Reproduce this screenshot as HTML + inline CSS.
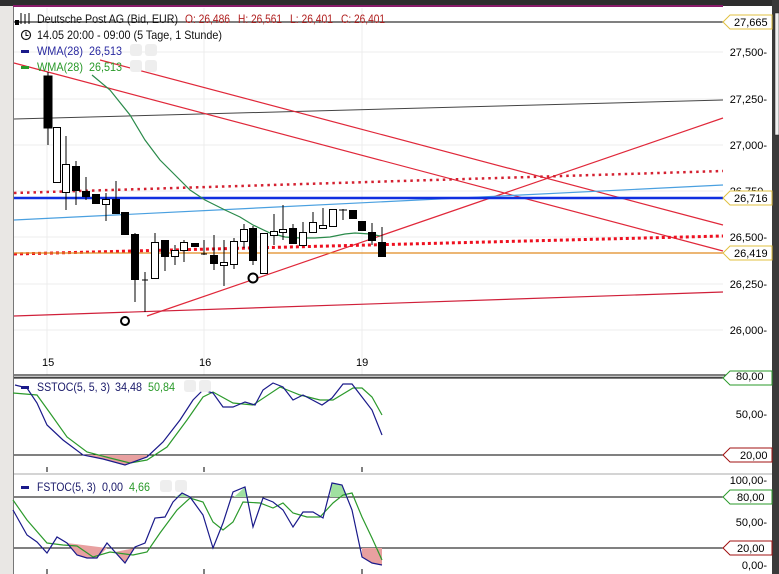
<!DOCTYPE html>
<html><head><meta charset="utf-8"><style>
html,body{margin:0;padding:0;background:#fff;}
svg{display:block;font-family:"Liberation Sans",sans-serif;}
</style></head><body>
<svg width="779" height="574" viewBox="0 0 779 574" xmlns="http://www.w3.org/2000/svg">
<rect width="779" height="574" fill="#fff"/>
<rect x="0" y="0" width="13" height="574" fill="#e9e7e4"/>
<line x1="13.5" y1="0" x2="13.5" y2="574" stroke="#777"/>
<rect x="0" y="0" width="779" height="6" fill="#2e2e2e"/>
<rect x="13" y="5" width="710" height="2" fill="#8a1a6a"/>
<rect x="772" y="0" width="7" height="574" fill="#3a3a3a"/>
<rect x="775" y="13" width="4" height="122" fill="#f0f0f0" stroke="#222" stroke-width="0.5"/>
<g stroke="#ececec" stroke-width="1">
<line x1="14" y1="52" x2="723" y2="52"/><line x1="14" y1="99" x2="723" y2="99"/>
<line x1="14" y1="145" x2="723" y2="145"/><line x1="14" y1="191" x2="723" y2="191"/>
<line x1="14" y1="237" x2="723" y2="237"/><line x1="14" y1="284" x2="723" y2="284"/>
<line x1="14" y1="330" x2="723" y2="330"/>
<line x1="47" y1="8" x2="47" y2="375"/><line x1="204" y1="8" x2="204" y2="375"/><line x1="362" y1="8" x2="362" y2="375"/>
</g>
<line x1="14" y1="22" x2="723" y2="22" stroke="#000"/>
<line x1="14" y1="119" x2="723" y2="100" stroke="#444"/>
<line x1="14" y1="63" x2="723" y2="251" stroke="#e0283a" stroke-width="1.2"/>
<line x1="100" y1="60" x2="723" y2="225" stroke="#e0283a" stroke-width="1.2"/>
<line x1="147" y1="316" x2="723" y2="118" stroke="#e0283a" stroke-width="1.2"/>
<line x1="14" y1="316" x2="723" y2="292" stroke="#d0203a" stroke-width="1.2"/>
<line x1="14" y1="193" x2="723" y2="171" stroke="#d42030" stroke-width="2.5" stroke-dasharray="2.5,4"/>
<line x1="14" y1="254" x2="723" y2="236" stroke="#ee1020" stroke-width="3" stroke-dasharray="3,3"/>
<line x1="14" y1="220" x2="723" y2="185" stroke="#4aa0e0" stroke-width="1.2"/>
<line x1="14" y1="198" x2="723" y2="198" stroke="#1030e0" stroke-width="2.5"/>
<line x1="14" y1="253" x2="723" y2="253" stroke="#e08a20" stroke-width="1.2"/>
<polyline fill="none" stroke="#2a8a4a" stroke-width="1.2" points="92,75 110,90 130,115 145,140 160,160 175,175 190,190 205,200 225,210 240,217 253,225 270,233 285,237 300,238 315,238 330,237 345,234 355,233 370,234 380,236"/>
<g stroke="#000" stroke-width="1">
<line x1="48" y1="72" x2="48" y2="145"/><rect x="44" y="76" width="8" height="52" fill="#000"/>
<rect x="53.5" y="127.5" width="7" height="55" fill="#fff"/>
<line x1="66" y1="136" x2="66" y2="210"/><rect x="62.5" y="164.5" width="7" height="28" fill="#fff"/>
<line x1="76" y1="161" x2="76" y2="205"/><rect x="72.5" y="166.5" width="7" height="24" fill="#000"/>
<line x1="86" y1="177" x2="86" y2="200"/><rect x="82.5" y="191.5" width="7" height="5" fill="#000"/>
<rect x="92.5" y="194.5" width="7" height="9" fill="#000"/>
<line x1="106" y1="193" x2="106" y2="221"/><rect x="102.5" y="199.5" width="7" height="5" fill="#fff"/>
<line x1="116" y1="181" x2="116" y2="213"/><rect x="112.5" y="199.5" width="7" height="14" fill="#000"/>
<rect x="121.5" y="212.5" width="7" height="22" fill="#000"/>
<line x1="135" y1="233" x2="135" y2="302"/><rect x="131.5" y="234.5" width="7" height="45" fill="#000"/>
<line x1="145" y1="272" x2="145" y2="312"/><line x1="142" y1="280" x2="148" y2="280"/>
<line x1="155" y1="233" x2="155" y2="279"/><rect x="151.5" y="242.5" width="7" height="36" fill="#fff"/>
<line x1="165" y1="240" x2="165" y2="271"/><rect x="161.5" y="240.5" width="7" height="16" fill="#000"/>
<line x1="175" y1="245" x2="175" y2="265"/><rect x="171.5" y="250.5" width="7" height="6" fill="#fff"/>
<line x1="184" y1="240" x2="184" y2="262"/><rect x="180.5" y="242.5" width="7" height="8" fill="#fff"/>
<rect x="191.5" y="243.5" width="7" height="3" fill="#000"/>
<line x1="204" y1="240" x2="204" y2="255"/><line x1="201" y1="254" x2="207" y2="254"/>
<line x1="214" y1="235" x2="214" y2="270"/><rect x="210.5" y="255.5" width="7" height="8" fill="#000"/>
<line x1="224" y1="240" x2="224" y2="286"/><rect x="220.5" y="262.5" width="7" height="3" fill="#fff"/>
<line x1="234" y1="238" x2="234" y2="269"/><rect x="230.5" y="241.5" width="7" height="23" fill="#fff"/>
<line x1="244" y1="224" x2="244" y2="248"/><rect x="240.5" y="229.5" width="7" height="12" fill="#fff"/>
<line x1="253" y1="226" x2="253" y2="265"/><rect x="249.5" y="228.5" width="7" height="32" fill="#000"/>
<rect x="260.5" y="233.5" width="7" height="40" fill="#fff"/>
<line x1="274" y1="214" x2="274" y2="245"/><rect x="270.5" y="231.5" width="7" height="4" fill="#fff"/>
<line x1="283" y1="205" x2="283" y2="240"/><rect x="279.5" y="229.5" width="7" height="3" fill="#fff"/>
<line x1="293" y1="224" x2="293" y2="243"/><rect x="289.5" y="228.5" width="7" height="15" fill="#000"/>
<line x1="303" y1="222" x2="303" y2="245"/><rect x="299.5" y="232.5" width="7" height="13" fill="#fff"/>
<line x1="313" y1="212" x2="313" y2="232"/><rect x="309.5" y="222.5" width="7" height="10" fill="#fff"/>
<line x1="323" y1="208" x2="323" y2="228"/><rect x="319.5" y="225.5" width="7" height="3" fill="#fff"/>
<rect x="329.5" y="209.5" width="7" height="17" fill="#fff"/>
<line x1="343" y1="209" x2="343" y2="220"/><line x1="339" y1="210" x2="347" y2="210"/>
<rect x="349.5" y="210.5" width="7" height="8" fill="#000"/>
<rect x="358.5" y="221.5" width="7" height="9" fill="#000"/>
<line x1="372" y1="223" x2="372" y2="245"/><rect x="368.5" y="232.5" width="7" height="8" fill="#000"/>
<line x1="382" y1="227" x2="382" y2="256"/><rect x="378.5" y="242.5" width="7" height="14" fill="#000"/>
</g>
<circle cx="125" cy="321" r="4" fill="#fff" stroke="#000" stroke-width="2"/>
<circle cx="253" cy="278" r="4.5" fill="#fff" stroke="#000" stroke-width="2"/>
<g font-size="11" fill="#000" text-anchor="end">
<text x="767" y="56">27,500-</text><text x="767" y="103">27,250-</text>
<text x="767" y="149">27,000-</text><text x="767" y="195">26,750-</text>
<text x="767" y="241">26,500-</text><text x="767" y="288">26,250-</text>
<text x="767" y="334">26,000-</text>
</g>
<g font-size="11">
<path d="M723,22 L730,15 H772 V29 H730 Z" fill="#fff" stroke="#e0c040"/><text x="734" y="26">27,665</text>
<path d="M723,198 L730,191 H772 V205 H730 Z" fill="#fff" stroke="#e0c040"/><text x="734" y="202">26,716</text>
<path d="M723,253 L730,246 H772 V260 H730 Z" fill="#fff" stroke="#e0c040"/><text x="734" y="257">26,419</text>
</g>
<g font-size="11" fill="#000"><text x="42" y="366">15</text><text x="199" y="366">16</text><text x="356" y="366">19</text></g>
<line x1="14" y1="375" x2="772" y2="375" stroke="#000"/>
<line x1="14" y1="377" x2="772" y2="377" stroke="#888"/>
<line x1="14" y1="378" x2="723" y2="378" stroke="#000"/>
<line x1="14" y1="455" x2="723" y2="455" stroke="#000"/>
<line x1="14" y1="474" x2="772" y2="474" stroke="#aaa"/>
<g stroke="#000"><line x1="47" y1="467" x2="47" y2="472"/><line x1="204" y1="467" x2="204" y2="472"/><line x1="362" y1="467" x2="362" y2="472"/>
<line x1="47" y1="569" x2="47" y2="574"/><line x1="204" y1="569" x2="204" y2="574"/><line x1="362" y1="569" x2="362" y2="574"/></g>
<polygon points="83,455 103,459 125,465 147,457 147,455" fill="#e8a0a0"/>
<polyline fill="none" stroke="#2c9a2c" stroke-width="1.2" points="13,393 37,395 50,413 67,437 87,452 110,458 130,463 147,460 167,447 187,420 203,397 213,392 233,403 253,405 280,387 300,395 320,400 333,400 353,388 362,388 372,397 382,415"/>
<polyline fill="none" stroke="#1a1a8a" stroke-width="1.2" points="15,385 27,388 37,403 47,425 63,440 83,455 103,459 125,465 147,457 163,442 180,420 193,400 203,390 213,393 223,407 233,407 245,402 255,405 263,390 273,383 283,387 293,400 303,395 322,405 332,398 343,384 352,384 362,397 372,410 382,435"/>
<g font-size="11" text-anchor="end"><text x="767" y="418">50,00-</text></g>
<path d="M723,378 L730,371 H772 V385 H730 Z" fill="#fff" stroke="#2a9a2a"/><text x="736" y="380" font-size="11">80,00</text>
<path d="M723,455 L730,448 H772 V462 H730 Z" fill="#fff" stroke="#a01010"/><text x="740" y="459" font-size="11">20,00</text>
<line x1="14" y1="497" x2="723" y2="497" stroke="#000"/>
<line x1="14" y1="548" x2="723" y2="548" stroke="#000"/>
<polygon points="67,543 77,555 87,558 97,558 107,548" fill="#e8a0a0"/>
<polygon points="115,552 125,563 135,548" fill="#e8a0a0"/>
<polygon points="362,548 362,557 372,563 382,565 382,548" fill="#e8a0a0"/>
<polygon points="175,497 182,493 190,497" fill="#a0e0a0"/>
<polygon points="234,497 245,487 248,497" fill="#a0e0a0"/>
<polygon points="330,497 332,483 342,485 348,497" fill="#a0e0a0"/>
<polyline fill="none" stroke="#2c9a2c" stroke-width="1.2" points="13,500 27,520 47,543 63,545 77,546 93,557 110,552 133,555 147,552 160,533 177,510 190,498 203,502 213,522 223,530 233,522 243,502 260,503 273,508 283,503 293,513 307,517 320,517 333,503 343,495 352,493 362,517 372,538 382,560"/>
<polyline fill="none" stroke="#1a1a8a" stroke-width="1.2" points="13,510 27,535 37,542 47,553 57,537 67,543 77,555 87,558 97,558 107,543 115,552 125,563 135,547 145,543 155,518 165,517 173,502 182,493 190,497 203,515 213,548 223,523 233,492 245,487 253,527 263,498 273,502 283,510 293,527 303,512 313,512 323,518 332,483 342,485 352,510 362,557 372,563 382,565"/>
<g font-size="11" text-anchor="end"><text x="767" y="484">100,00-</text><text x="767" y="526">50,00-</text><text x="767" y="569">0,00-</text></g>
<path d="M723,497 L730,490 H772 V504 H730 Z" fill="#fff" stroke="#2a9a2a"/><text x="737" y="501" font-size="11">80,00</text>
<path d="M723,548 L730,541 H772 V555 H730 Z" fill="#fff" stroke="#a01010"/><text x="737" y="552" font-size="11">20,00</text>
<g font-size="12" lengthAdjust="spacingAndGlyphs">
<g stroke="#000" stroke-width="1"><line x1="21" y1="13" x2="21" y2="24"/><line x1="25" y1="14" x2="25" y2="24"/><line x1="29" y1="13" x2="29" y2="24"/></g>
<rect x="15" y="20" width="4" height="5" fill="#000"/>
<text x="37" y="23" fill="#111" textLength="141" lengthAdjust="spacingAndGlyphs">Deutsche Post AG (Bid, EUR)</text>
<g fill="#b02020"><text x="185" y="23" textLength="45" lengthAdjust="spacingAndGlyphs">O: 26,486</text><text x="238" y="23" textLength="44" lengthAdjust="spacingAndGlyphs">H: 26,561</text><text x="290" y="23" textLength="43" lengthAdjust="spacingAndGlyphs">L: 26,401</text><text x="341" y="23" textLength="44" lengthAdjust="spacingAndGlyphs">C: 26,401</text></g>
<circle cx="26" cy="35" r="4.5" fill="none" stroke="#111" stroke-width="1.2"/><path d="M26,32 V35.5 H28.5" fill="none" stroke="#111"/>
<text x="37" y="39" fill="#111" textLength="185" lengthAdjust="spacingAndGlyphs">14.05 20:00 - 09:00 (5 Tage, 1 Stunde)</text>
<rect x="21" y="50" width="8" height="3" fill="#1a1a8a"/><text x="37" y="55" fill="#2a2aa0" textLength="46" lengthAdjust="spacingAndGlyphs">WMA(28)</text><text x="89" y="55" fill="#2a2aa0" textLength="33" lengthAdjust="spacingAndGlyphs">26,513</text>
<rect x="21" y="66" width="8" height="3" fill="#2a9a2a"/><text x="37" y="71" fill="#2a9a2a" textLength="46" lengthAdjust="spacingAndGlyphs">WMA(28)</text><text x="89" y="71" fill="#2a9a2a" textLength="33" lengthAdjust="spacingAndGlyphs">26,513</text>
<rect x="130" y="44" width="12" height="12" rx="3" fill="#eee"/><rect x="145" y="44" width="12" height="12" rx="3" fill="#eee"/>
<rect x="130" y="60" width="12" height="12" rx="3" fill="#eee"/><rect x="145" y="60" width="12" height="12" rx="3" fill="#eee"/>
<rect x="21" y="386" width="8" height="3" fill="#1a1a8a"/>
<text x="37" y="391" fill="#1a1a6a" textLength="73" lengthAdjust="spacingAndGlyphs">SSTOC(5, 5, 3)</text><text x="115" y="391" fill="#1a1a6a" textLength="27" lengthAdjust="spacingAndGlyphs">34,48</text><text x="148" y="391" fill="#2a9a2a" textLength="27" lengthAdjust="spacingAndGlyphs">50,84</text>
<rect x="184" y="380" width="12" height="12" rx="3" fill="#eee"/><rect x="199" y="380" width="12" height="12" rx="3" fill="#eee"/>
<rect x="21" y="486" width="8" height="3" fill="#1a1a8a"/>
<text x="37" y="491" fill="#1a1a6a" textLength="59" lengthAdjust="spacingAndGlyphs">FSTOC(5, 3)</text><text x="102" y="491" fill="#1a1a6a" textLength="21" lengthAdjust="spacingAndGlyphs">0,00</text><text x="129" y="491" fill="#2a9a2a" textLength="21" lengthAdjust="spacingAndGlyphs">4,66</text>
<rect x="160" y="480" width="12" height="12" rx="3" fill="#eee"/><rect x="175" y="480" width="12" height="12" rx="3" fill="#eee"/>
</g>
</svg>
</body></html>
